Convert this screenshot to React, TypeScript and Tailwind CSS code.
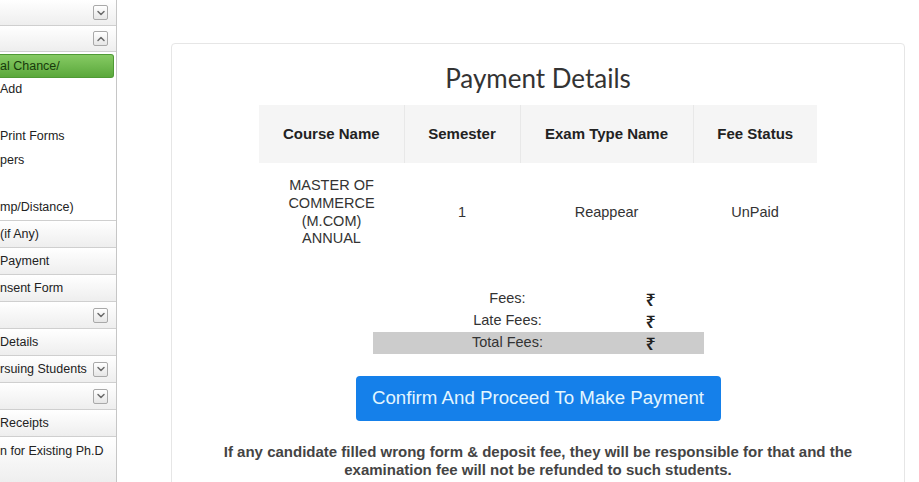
import { ChevronDown, ChevronUp } from 'lucide-react'

const sans = { fontFamily: '"Liberation Sans", Arial, sans-serif' }

function Chevron({ up }: { up?: boolean }) {
  const Icon = up ? ChevronUp : ChevronDown
  return (
    <span className="ml-auto mr-[8px] flex h-[15px] w-[15px] shrink-0 items-center justify-center rounded-[2px] border border-[#a9a9a9] bg-gradient-to-b from-white to-[#e6e6e6]">
      <Icon className="h-[12px] w-[12px] text-[#6b6b6b]" strokeWidth={3} />
    </span>
  )
}

function SideRow({
  text,
  chevron,
  up,
  h = 'h-[27px]',
}: {
  text?: string
  chevron?: boolean
  up?: boolean
  h?: string
}) {
  return (
    <div
      className={`${h} flex items-center border-b border-[#cfcfcf] bg-gradient-to-b from-white to-[#eeeeee] text-[12.5px] text-[#222] whitespace-nowrap`}
    >
      {text && <span>{text}</span>}
      {chevron && <Chevron up={up} />}
    </div>
  )
}

function Sidebar() {
  return (
    <aside className="h-[482px] w-[117px] shrink-0 overflow-hidden border-r border-[#c6c6c6] bg-white" style={sans}>
      <SideRow chevron h="h-[26px]" />
      <SideRow chevron up h="h-[26px]" />

      {/* expanded group */}
      <div className="border-b border-[#cfcfcf] pt-[2px] pb-[1px] text-[12.5px] text-[#222] whitespace-nowrap">
        <div className="mr-[2px] flex h-[24px] items-center rounded-r-[3px] border border-l-0 border-[#4f9a35] bg-gradient-to-b from-[#86ca63] to-[#5aa83b] text-[#173a0b]">
          al Chance/
        </div>
        <div className="flex h-[23.5px] items-center">Add</div>
        <div className="h-[23.5px]" />
        <div className="flex h-[23.5px] items-center">Print Forms</div>
        <div className="flex h-[23.5px] items-center">pers</div>
        <div className="h-[23.5px]" />
        <div className="flex h-[23.5px] items-center">mp/Distance)</div>
      </div>

      <SideRow text="(if Any)" />
      <SideRow text="Payment" />
      <SideRow text="nsent Form" />
      <SideRow chevron />
      <SideRow text="Details" />
      <SideRow text="rsuing Students" chevron />
      <SideRow chevron />
      <SideRow text="Receipts" />
      <div className="h-[46px] bg-gradient-to-b from-white to-[#eeeeee] pt-[5px] text-[12.5px] text-[#222] whitespace-nowrap">
        n for Existing Ph.D
      </div>
    </aside>
  )
}

function Rupee() {
  return (
    <span
      className="block text-[18px] font-semibold leading-[18px] text-[#222]"
      style={{ fontFamily: '"Noto Sans", "DejaVu Sans", sans-serif' }}
    >
      ₹
    </span>
  )
}

export default function App() {
  return (
    <div className="flex h-[482px] w-[919px] overflow-hidden bg-white">
      <Sidebar />

      <main className="flex-1 pt-[43px] pl-[54px] pr-[14px]">
        <div className="h-[460px] rounded-[4px] border border-[#e6e6e6] pt-[18px]">
          <h2
            className="text-center text-[26px] leading-[32px] text-[#333]"
            style={{ fontFamily: 'Lato, "Open Sans", sans-serif' }}
          >
            Payment Details
          </h2>

          <table className="mx-auto mt-[11px] w-[558px] table-fixed border-collapse text-center text-[#222]" style={sans}>
            <colgroup>
              <col className="w-[145px]" />
              <col className="w-[116px]" />
              <col className="w-[173px]" />
              <col className="w-[124px]" />
            </colgroup>
            <thead>
              <tr className="h-[58px] bg-[#f5f5f5] text-[15px] font-bold">
                <th className="border-r border-[#e8e8e8]">Course Name</th>
                <th className="border-r border-[#e8e8e8]">Semester</th>
                <th className="border-r border-[#e8e8e8]">Exam Type Name</th>
                <th>Fee Status</th>
              </tr>
            </thead>
            <tbody>
              <tr className="h-[99px] text-[14.5px] text-[#333]">
                <td className="px-[20px] leading-[17.7px]">
                  MASTER OF COMMERCE (M.COM) ANNUAL
                </td>
                <td>1</td>
                <td>Reappear</td>
                <td>UnPaid</td>
              </tr>
            </tbody>
          </table>

          {/* fee summary */}
          <div className="mx-auto mt-[26px] w-[331px] text-[14.5px] text-[#333]" style={sans}>
            <div className="flex h-[22px] items-center">
              <span className="w-[270px] text-center">Fees:</span>
              <span className="pl-[3px]"><Rupee /></span>
            </div>
            <div className="flex h-[22px] items-center">
              <span className="w-[270px] text-center">Late Fees:</span>
              <span className="pl-[3px]"><Rupee /></span>
            </div>
            <div className="flex h-[22px] items-center bg-[#cccccc]">
              <span className="w-[270px] text-center">Total Fees:</span>
              <span className="pl-[3px]"><Rupee /></span>
            </div>
          </div>

          <div className="mt-[22px] flex justify-center">
            <button
              className="h-[45px] w-[365px] rounded-[4px] bg-[#1580ea] text-[18.7px] text-[#e3f6ff]"
              style={sans}
            >
              Confirm And Proceed To Make Payment
            </button>
          </div>

          <p
            className="mt-[22px] text-center text-[15px] font-bold leading-[18px] text-[#444]"
            style={sans}
          >
            If any candidate filled wrong form &amp; deposit fee, they will be responsible for that and the
            <br />
            examination fee will not be refunded to such students.
          </p>
        </div>
      </main>
    </div>
  )
}
